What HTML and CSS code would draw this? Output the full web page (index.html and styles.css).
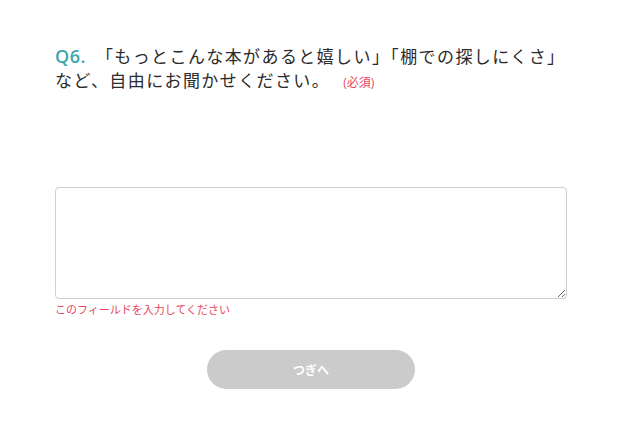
FILE: index.html
```html
<!DOCTYPE html>
<html lang="ja">
<head>
    <meta charset="UTF-8">
    <meta name="viewport" content="width=device-width, initial-scale=1.0">
    <title>アンケート</title>
    <link rel="stylesheet" href="styles.css">
</head>
<body>
    <form class="survey" action="">
        <div class="question">
            <p class="question-title">
                <span class="q-num">Q6.</span>「もっとこんな本があると嬉しい」「棚での探しにくさ」<br>など、自由にお聞かせください。<span class="required">(必須)</span>
            </p>
        </div>
        <div class="answer">
            <textarea class="answer-text"></textarea>
            <p class="error">このフィールドを入力してください</p>
        </div>
        <div class="actions">
            <button type="button" class="next-btn" disabled>つぎへ</button>
        </div>
    </form>
</body>
</html>
```

FILE: styles.css
```css
body {
    margin: 0;
    padding: 0;
    background: #fff;
    font-family: "Open Sans", "Noto Sans CJK JP", sans-serif;
    color: #222;
}
.survey {
    width: 512px;
    margin: 0 0 0 55px;
    padding-top: 44px;
}
.question-title {
    width: 540px;
    margin: 0;
    font-size: 17px;
    line-height: 24px;
    letter-spacing: 1.4px;
    color: #2b2b2b;
}
.q-num {
    color: #3aa9ab;
    font-size: 18px;
    font-weight: 600;
    margin-right: 10px;
    letter-spacing: 0.5px;
}
.required {
    color: #e8485f;
    font-size: 12px;
    line-height: 1;
    letter-spacing: 0;
    margin-left: 13px;
}
.answer {
    margin-top: 94px;
}
.answer-text {
    display: block;
    box-sizing: border-box;
    width: 512px;
    height: 112px;
    border: 1px solid #ccd0d4;
    border-radius: 4px;
    padding: 8px;
    margin: 0;
    font-family: inherit;
}
.error {
    margin: 2px 0 0;
    font-size: 11px;
    line-height: 18px;
    color: #e8485f;
}
.actions {
    display: flex;
    justify-content: center;
    margin-top: 31px;
}
.next-btn {
    width: 208px;
    height: 39px;
    border: none;
    border-radius: 20px;
    background-color: #cbcbcb;
    color: #fff;
    font-family: "Noto Sans CJK JP", sans-serif;
    font-weight: bold;
    font-size: 12px;
}
```
